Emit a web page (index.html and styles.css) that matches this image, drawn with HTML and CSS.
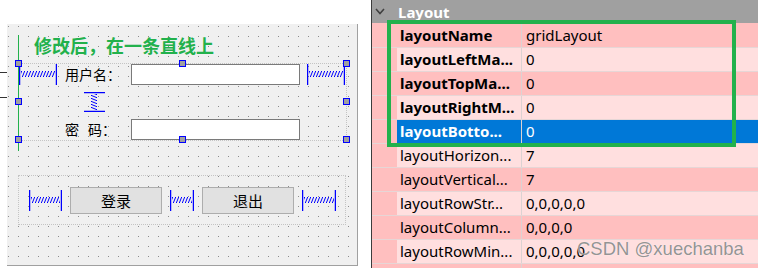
FILE: index.html
```html
<!DOCTYPE html>
<html lang="zh-CN">
<head>
    <meta charset="UTF-8">
    <title>Qt Designer - Layout</title>
    <link rel="stylesheet" href="styles.css">
</head>
<body>

<!-- motivos das molas (spacers) -->
<svg class="svg-defs" width="0" height="0">
    <defs>
        <pattern id="hcoil" patternUnits="userSpaceOnUse" width="3" height="21">
            <path d="M0.5 12.5 L2.5 7.5" stroke="#0000ff" stroke-width="1" fill="none"/>
            <path d="M0 12.5 H3" stroke="#0000ff" stroke-width="1" stroke-dasharray="1 2"/>
            <path d="M0 7.5 H3" stroke="#0000ff" stroke-width="1" stroke-dasharray="1 2" stroke-dashoffset="-2"/>
        </pattern>
        <pattern id="vcoil" patternUnits="userSpaceOnUse" width="21" height="3">
            <path d="M7.5 0.5 L12.5 2.5" stroke="#0000ff" stroke-width="1" fill="none"/>
            <path d="M7.5 0 V3" stroke="#0000ff" stroke-width="1" stroke-dasharray="1 2"/>
            <path d="M12.5 0 V3" stroke="#0000ff" stroke-width="1" stroke-dasharray="1 2" stroke-dashoffset="-2"/>
        </pattern>
    </defs>
</svg>

<div class="page">

    <div class="designer">
        <span class="edge-mark mark-top"></span>
        <span class="edge-mark mark-bottom"></span>

        <div class="form">
            <div class="green-line"></div>
            <div class="title">修改后，在一条直线上</div>

            <div class="grid-layout">
                <svg class="spring" width="38" height="21" viewBox="0 0 38 21">
                    <line x1="0.5" y1="0" x2="0.5" y2="21"/>
                    <line x1="37.5" y1="0" x2="37.5" y2="21"/>
                    <rect x="2" y="6" width="34" height="8" fill="url(#hcoil)"/>
                </svg>
                <div class="label">用户名：</div>
                <div class="line-edit"></div>
                <svg class="spring spring-right" width="38" height="21" viewBox="0 0 38 21">
                    <line x1="0.5" y1="0" x2="0.5" y2="21"/>
                    <line x1="37.5" y1="0" x2="37.5" y2="21"/>
                    <rect x="2" y="6" width="34" height="8" fill="url(#hcoil)"/>
                </svg>

                <svg class="vspring" width="21" height="20" viewBox="0 0 21 20">
                    <line x1="0" y1="0.5" x2="21" y2="0.5"/>
                    <line x1="0" y1="19.5" x2="21" y2="19.5"/>
                    <rect x="6" y="2" width="9" height="16" fill="url(#vcoil)"/>
                </svg>

                <div class="label label-pwd">密<span class="gap"></span>码：</div>
                <div class="line-edit line-edit-pwd"></div>

                <!-- alças de seleção -->
                <span class="handle h-tl"></span>
                <span class="handle h-tm"></span>
                <span class="handle h-tr"></span>
                <span class="handle h-ml"></span>
                <span class="handle h-mr"></span>
                <span class="handle h-bl"></span>
                <span class="handle h-bm"></span>
                <span class="handle h-br"></span>
            </div>

            <div class="btn-row">
                <svg class="spring" width="33" height="21" viewBox="0 0 33 21">
                    <line x1="0.5" y1="0" x2="0.5" y2="21"/>
                    <line x1="32.5" y1="0" x2="32.5" y2="21"/>
                    <rect x="2" y="6" width="29" height="8" fill="url(#hcoil)"/>
                </svg>
                <button class="btn">登录</button>
                <svg class="spring" width="24" height="21" viewBox="0 0 24 21">
                    <line x1="0.5" y1="0" x2="0.5" y2="21"/>
                    <line x1="23.5" y1="0" x2="23.5" y2="21"/>
                    <rect x="2" y="6" width="20" height="8" fill="url(#hcoil)"/>
                </svg>
                <button class="btn">退出</button>
                <svg class="spring" width="34" height="21" viewBox="0 0 34 21">
                    <line x1="0.5" y1="0" x2="0.5" y2="21"/>
                    <line x1="33.5" y1="0" x2="33.5" y2="21"/>
                    <rect x="2" y="6" width="30" height="8" fill="url(#hcoil)"/>
                </svg>
            </div>
        </div>
    </div>

    <div class="props">
        <div class="props-head">
            <svg class="chevron" width="10" height="7" viewBox="0 0 10 7">
                <polyline points="1,1 5,5.5 9,1"/>
            </svg>
            <span>Layout</span>
        </div>

        <div class="prop-row dark"><span class="strip"></span><span class="name bold">layoutName</span><span class="value">gridLayout</span></div>
        <div class="prop-row light"><span class="strip"></span><span class="name bold">layoutLeftMa...</span><span class="value">0</span></div>
        <div class="prop-row dark"><span class="strip"></span><span class="name bold">layoutTopMa...</span><span class="value">0</span></div>
        <div class="prop-row light"><span class="strip"></span><span class="name bold">layoutRightM...</span><span class="value">0</span></div>
        <div class="prop-row sel"><span class="strip"></span><span class="name bold">layoutBotto...</span><span class="value">0</span></div>
        <div class="prop-row light"><span class="strip"></span><span class="name">layoutHorizon...</span><span class="value">7</span></div>
        <div class="prop-row dark"><span class="strip"></span><span class="name">layoutVertical...</span><span class="value">7</span></div>
        <div class="prop-row light"><span class="strip"></span><span class="name">layoutRowStr...</span><span class="value">0,0,0,0,0</span></div>
        <div class="prop-row dark"><span class="strip"></span><span class="name">layoutColumn...</span><span class="value">0,0,0,0</span></div>
        <div class="prop-row light"><span class="strip"></span><span class="name">layoutRowMin...</span><span class="value">0,0,0,0,0</span></div>
        <div class="prop-row dark"><span class="strip"></span><span class="name"></span><span class="value"></span></div>

        <!-- destaque verde por cima das propriedades -->
        <div class="highlight"></div>
        <div class="watermark">CSDN @xuechanba</div>
    </div>

</div>

</body>
</html>
```

FILE: styles.css
```css
* {
    box-sizing: border-box;
}
body {
    margin: 0;
    width: 758px;
    height: 268px;
    overflow: hidden;
    background: #fff;
    font-family: "Noto Sans CJK SC", sans-serif;
}
.svg-defs {
    position: absolute; /* só guarda os patterns */
    width: 0;
    height: 0;
}
.page {
    display: flex;
    height: 268px;
    overflow: hidden;
}

/* ---- editor de formulário ---- */
.designer {
    position: relative;
    width: 371px;
    flex: none;
    padding: 24px 0 0 7px;
}
.edge-mark {
    position: absolute;
    left: 0;
    width: 7px;
    height: 1px;
    background: #333;
}
.mark-top { top: 72px; }
.mark-bottom { top: 97px; }

.form {
    position: relative;
    width: 351px;
    height: 242px;
    background-color: #f0f0f0;
    background-image: conic-gradient(at 1px 1px, transparent 270deg, #8c8c8c 0);
    background-size: 10px 10px;
    background-position: 1px 2px;
    border-right: 1px solid #a0a0a0;
    border-bottom: 1px solid #a0a0a0;
}
.green-line {
    position: absolute;
    left: 11px;
    top: 11px;
    width: 1px;
    height: 116px;
    background: #22b14c;
    z-index: 2;
}
.title {
    height: 39px;
    padding: 10px 0 0 27px;
    font-size: 18px;
    line-height: 22px;
    font-weight: bold;
    color: #22b14c;
}

.grid-layout {
    position: relative;
    margin-left: 11px;
    width: 329px;
    height: 78px;
    border: 1px dotted #c4c4c4;
    display: grid;
    grid-template-columns: 40px 72px 169px 46px;
    grid-template-rows: 21px 34px 21px;
}
.spring line,
.vspring line {
    stroke: #0000ff;
    stroke-width: 1.5;
}
.spring-right {
    margin-left: 7px;
}
.label {
    padding-left: 6px;
    font-size: 14px;
    line-height: 21px;
    color: #000;
}
.gap {
    display: inline-block;
    width: 9px;
}
.label-pwd {
    grid-row: 3;
    grid-column: 2;
}
.line-edit {
    height: 21px;
    background: #fff;
    border: 1px solid #7a7a7a;
}
.line-edit-pwd {
    grid-row: 3;
    grid-column: 3;
}
.vspring {
    grid-row: 2;
    grid-column: 2;
    margin: 7px 0 0 25px;
}

.handle {
    position: absolute;
    width: 7px;
    height: 7px;
    background: #a0a0a0;
    border: 1px solid #0000ff;
    z-index: 3;
}
.h-tl { left: -4px; top: -4px; }
.h-tm { left: 160px; top: -4px; }
.h-tr { left: 324px; top: -4px; }
.h-ml { left: -4px; top: 34px; }
.h-mr { left: 324px; top: 34px; }
.h-bl { left: -4px; top: 72px; }
.h-bm { left: 160px; top: 72px; }
.h-br { left: 324px; top: 72px; }

.btn-row {
    margin: 34px 0 0 11px;
    width: 328px;
    height: 50px;
    border: 1px dotted #c4c4c4;
    display: flex;
    align-items: center;
    gap: 8px;
    padding-left: 10px;
}
.btn {
    width: 92px;
    height: 27px;
    padding: 0;
    background: #e1e1e1;
    border: 1px solid #adadad;
    font-family: "Noto Sans CJK SC", sans-serif;
    font-size: 15px;
    color: #000;
}

/* ---- editor de propriedades ---- */
.props {
    position: relative;
    flex: 1;
    border-left: 1px solid #3c3c3c;
    font-family: "Noto Sans", "Noto Sans CJK SC", sans-serif;
    font-size: 15px;
}
.props-head {
    height: 24px;
    background: #a0a0a0;
    border-bottom: 1px solid #ffbfbf;
    display: flex;
    align-items: center;
    color: #fff;
    font-weight: bold;
}
.chevron {
    margin: 0 13px 0 3px;
}
.chevron polyline {
    fill: none;
    stroke: #404040;
    stroke-width: 1.6;
}
.prop-row {
    display: grid;
    grid-template-columns: 25px 125px 1fr;
    height: 24px;
    border-bottom: 1px solid #e6d6d6;
    line-height: 23px;
    white-space: nowrap;
}
.strip {
    background: #ffbfbf;
}
.name {
    padding-left: 3px;
    border-right: 1px solid #dcd2d2;
    overflow: hidden;
    color: #000;
}
.value {
    padding-left: 4px;
    color: #000;
}
.bold {
    font-weight: bold;
}
.dark .name,
.dark .value {
    background: #ffbfbf;
}
.light .name,
.light .value {
    background: #ffdfdf;
}
.sel .name,
.sel .value {
    background: #0078d7;
    color: #fff;
}
.highlight {
    position: absolute;
    left: 15px;
    top: 20px;
    width: 349px;
    height: 127px;
    border: 4px solid #22b14c;
}
.watermark {
    position: absolute;
    left: 205px;
    top: 239px;
    font-family: "Liberation Sans", Arial, sans-serif;
    font-size: 18.5px;
    line-height: 20px;
    color: rgba(120, 120, 120, 0.8);
    text-shadow: 0 0 1px #fff;
    white-space: nowrap;
}
```
